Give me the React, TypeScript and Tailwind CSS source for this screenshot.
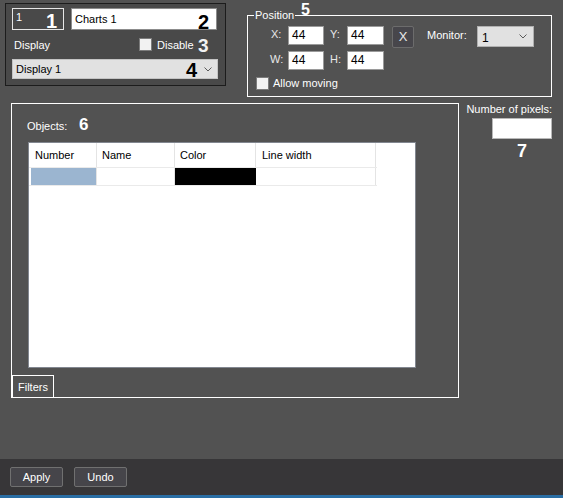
import React from "react";

function Tag({ n, className }: { n: string; className: string }) {
  return (
    <span className={`absolute font-bold leading-none font-['Liberation_Sans',Arial,sans-serif] ${className}`}>
      {n}
    </span>
  );
}

function Chevron() {
  return (
    <svg width="8" height="5" viewBox="0 0 8 5" className="shrink-0">
      <polyline points="0.5,0.5 4,4 7.5,0.5" fill="none" stroke="#5a5a5a" strokeWidth="1" />
    </svg>
  );
}

function Box({ value, w }: { value: string; w: string }) {
  return (
    <div className={`${w} h-[19px] bg-white border border-[#9a9a9a] text-black pl-[3px] leading-[17px] text-[12px]`}>
      {value}
    </div>
  );
}

function Check() {
  return <div className="w-[13px] h-[13px] bg-[#f2f2f2] border border-[#7c7c7c] shrink-0" />;
}

export default function App() {
  return (
    <div className="w-[563px] h-[498px] bg-[#525252] flex flex-col text-[11px] leading-[14px] text-white font-['Liberation_Sans',Arial,sans-serif] overflow-hidden">
      <div className="flex-1">
        {/* top row */}
        <div className="flex items-start pl-[5px] pt-[3px]">
          <div className="w-[221px] h-[83px] border border-[#1c1c1c] bg-[#494949] px-[6px] pt-[4px]">
            <div className="flex">
              <div className="relative w-[52px] h-[22px] border border-[#e6e6e6] pl-[3px] pt-[1px]">
                1
                <Tag n="1" className="left-[33px] top-[2px] text-[20px] text-white" />
              </div>
              <div className="relative ml-[7px] w-[146px] h-[22px] bg-white border border-[#8c8c8c] pl-[3px] leading-[20px] text-black">
                Charts 1
                <Tag n="2" className="left-[126px] top-[3px] text-[20px] text-black" />
              </div>
            </div>
            <div className="relative flex items-center h-[13px] mt-[8px]">
              <span className="w-[127px] pl-[2px]">Display</span>
              <div className="flex items-center gap-[5px]">
                <Check />
                <span>Disable</span>
              </div>
              <Tag n="3" className="left-[186px] top-[-2px] text-[19px] text-[#f2f2f2]" />
            </div>
            <div className="relative mt-[8px] w-[206px] h-[20px] bg-[#e1e1e1] border border-[#c4c4c4] flex items-center pl-[3px] pr-[5px] text-black">
              <span>Display 1</span>
              <span className="ml-auto">
                <Chevron />
              </span>
              <Tag n="4" className="left-[173px] top-[0px] text-[20px] text-black" />
            </div>
          </div>

          <fieldset className="ml-[21px] mt-[5px] w-[305px] h-[89px] border border-white pl-[6px] pr-0 min-w-0">
            <legend className="relative px-[1px] leading-[14px]">
              Position
              <Tag n="5" className="left-[47px] top-[-6px] text-[16px] text-white" />
            </legend>
            <div className="flex items-start pt-[4px]">
              <div className="flex flex-col pl-[16px]">
                <div className="flex items-start">
                  <span className="w-[18px] pl-[1px] pt-[1px] text-[#e8e8e8]">X:</span>
                  <Box value="44" w="w-[36px]" />
                  <span className="ml-[6px] w-[17px] pt-[1px] text-[#e8e8e8]">Y:</span>
                  <Box value="44" w="w-[37px]" />
                </div>
                <div className="flex items-start mt-[6px]">
                  <span className="w-[18px] pt-[1px] text-[#e8e8e8]">W:</span>
                  <Box value="44" w="w-[36px]" />
                  <span className="ml-[6px] w-[17px] pt-[1px] text-[#e8e8e8]">H:</span>
                  <Box value="44" w="w-[37px]" />
                </div>
              </div>
              <div className="ml-[8px] w-[22px] h-[22px] bg-[#47464b] border border-[#6c6c6c] rounded-[2px] flex items-center justify-center text-[13px] text-[#e8e8e8]">
                X
              </div>
              <span className="ml-[13px] w-[50px] pt-[2px]">Monitor:</span>
              <div className="w-[57px] h-[21px] bg-[#e1e1e1] border border-[#b0b0b0] flex items-center pl-[4px] pr-[6px] text-[12px] text-black">
                <span className="pt-[2px]">1</span>
                <span className="ml-auto">
                  <Chevron />
                </span>
              </div>
            </div>
            <div className="flex items-center mt-[6px] pl-[2px] gap-[4px]">
              <Check />
              <span>Allow moving</span>
            </div>
          </fieldset>
        </div>

        {/* second row */}
        <div className="flex items-start pl-[11px] mt-[6px]">
          <div className="w-[448px] h-[295px] border border-white flex flex-col">
            <div className="pl-[15px] pt-[15px] flex items-center relative">
              <span>Objects:</span>
              <Tag n="6" className="left-[67px] top-[12px] text-[17px] text-white" />
            </div>
            <div className="ml-[16px] mt-[9px] w-[388px] h-[226px] bg-white border border-[#828790] text-black">
              <div className="flex h-[24px]">
                <div className="w-[68px] border-r border-[#e4e4e4] flex items-center pl-[6px]">Number</div>
                <div className="w-[78px] border-r border-[#e4e4e4] flex items-center pl-[5px]">Name</div>
                <div className="w-[81px] border-r border-[#e4e4e4] flex items-center pl-[5px]">Color</div>
                <div className="w-[120px] border-r border-[#e4e4e4] flex items-center pl-[6px]">Line width</div>
              </div>
              <div className="flex h-[19px] w-[348px] border-t border-b border-[#eaeaea]">
                <div className="w-[68px] pl-[2px] border-r border-[#e4e4e4]">
                  <div className="h-full bg-[#9bb5d0]" />
                </div>
                <div className="w-[78px] border-r border-[#e4e4e4]" />
                <div className="w-[81px] bg-black" />
                <div className="w-[120px] border-r border-[#e4e4e4]" />
              </div>
            </div>
            <div className="mt-auto w-[42px] h-[22px] border-t border-l border-r border-white flex items-center justify-center">
              Filters
            </div>
          </div>

          <div className="ml-[10px] w-[83px] flex flex-col items-end">
            <span className="leading-[12px] whitespace-nowrap">Number of pixels:</span>
            <div className="mt-[3px] w-[60px] h-[21px] bg-white border border-[#b8b8b8]" />
            <div className="w-[60px] text-center font-bold text-[18px] leading-[20px] mt-[2px]">7</div>
          </div>
        </div>
      </div>

      {/* bottom bar */}
      <div className="h-[36px] bg-[#373638] flex items-start pt-[8px] pl-[10px] gap-[11px]">
        <div className="w-[53px] h-[20px] bg-[#46454a] border border-[#707070] rounded-[2px] flex items-center justify-center">
          Apply
        </div>
        <div className="w-[53px] h-[20px] bg-[#46454a] border border-[#707070] rounded-[2px] flex items-center justify-center">
          Undo
        </div>
      </div>
      <div className="h-[3px] bg-[#2a6ea4]" />
    </div>
  );
}
